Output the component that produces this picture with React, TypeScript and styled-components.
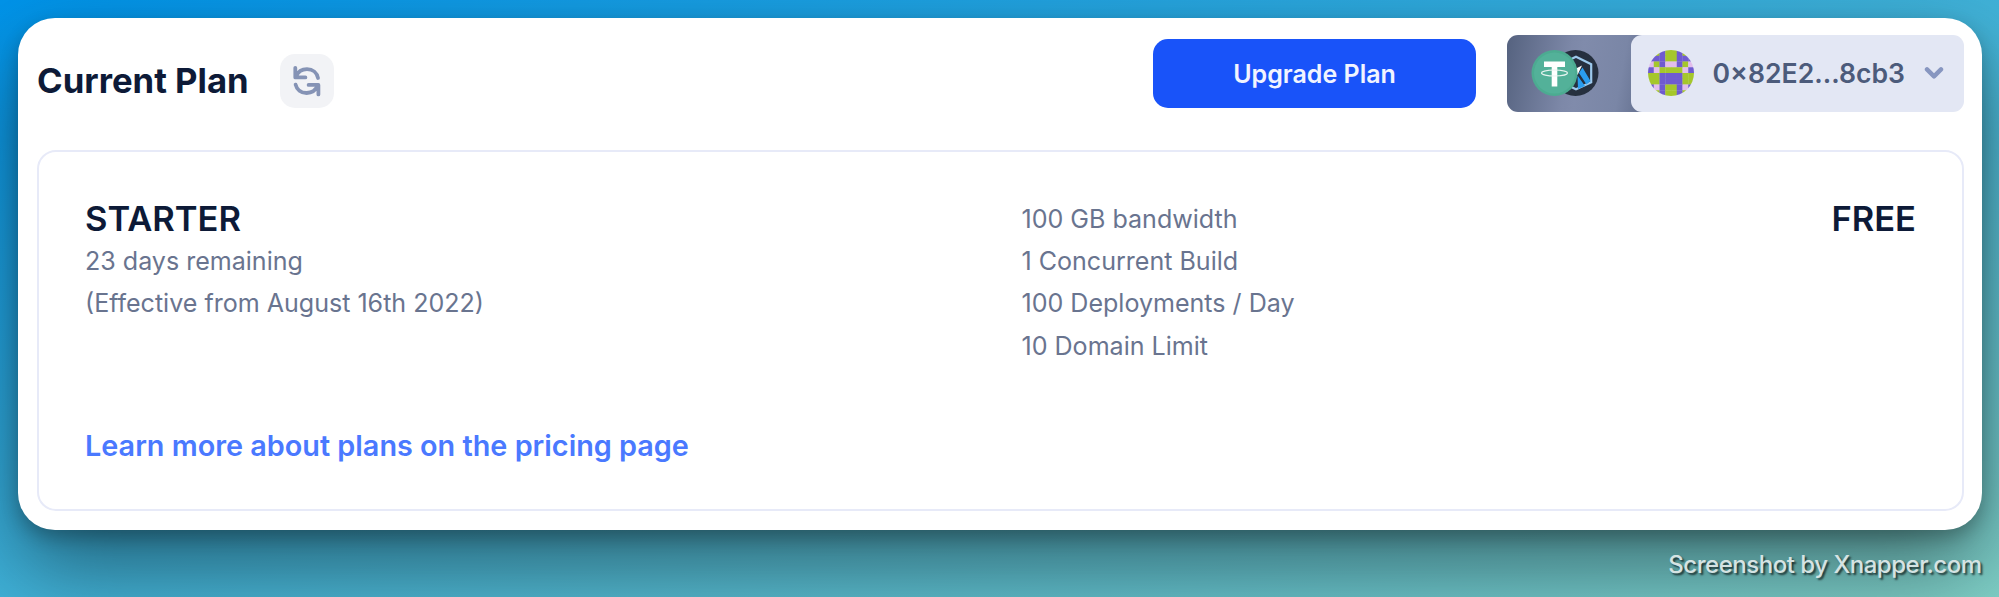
import React from "react";
import styled, { createGlobalStyle } from "styled-components";

const Global = createGlobalStyle`
  * { box-sizing: border-box; }
  body { margin: 0; font-family: Inter, "Liberation Sans", sans-serif; }
`;

const Backdrop = styled.main`
  height: 597px;
  padding: 17.5px 17.5px 0;
  display: flex;
  flex-direction: column;
  overflow: hidden;
  background: linear-gradient(to bottom right, #0093e9, #80d0c7);
`;

const Card = styled.section`
  height: 512.5px;
  flex: none;
  padding: 17.5px 17.5px 19.5px 19.5px;
  border-radius: 37px;
  background: #fff;
  box-shadow: 0 38px 86px rgba(0, 0, 0, 0.45), 0 8px 18px rgba(0, 0, 0, 0.24);
  display: flex;
  flex-direction: column;
`;

const Header = styled.header`
  height: 115px;
  display: flex;
  align-items: flex-start;
`;

const Title = styled.h1`
  margin: 25px 0 0;
  width: 243px;
  font-size: 34.7px;
  line-height: 40px;
  font-weight: 700;
  color: #0d1a37;
  white-space: nowrap;
`;

const RefreshButton = styled.button`
  width: 54px;
  height: 54px;
  margin: 19px auto 0 0;
  padding: 0;
  border: 0;
  border-radius: 15px;
  background: #f2f3f6;
`;

const UpgradeButton = styled.button`
  width: 323px;
  height: 69.5px;
  margin: 3.5px 30.5px 0 0;
  padding: 1px 0 0;
  border: 0;
  border-radius: 15px;
  background: #1953f9;
  color: #f1f4ff;
  font: 600 25px Inter, sans-serif;
`;

const Wallet = styled.div`
  width: 457.5px;
  height: 76.5px;
  display: flex;
`;

const Tokens = styled.div`
  width: 138px;
  padding: 15px 0 0 24px;
  border-radius: 11px 0 0 11px;
  background: linear-gradient(100deg, #55627f 0%, #7d88a8 44%, #808bab 52%, #7a86a6 80%, #64708f 98%);
`;

const Account = styled.div`
  flex: 1;
  display: flex;
  align-items: center;
  margin-left: -14px;
  padding-left: 17px;
  border-radius: 11px;
  background: #e3e7f4;
`;

const Address = styled.span`
  width: 211px;
  margin-left: 19px;
  font-size: 26.6px;
  font-weight: 600;
  color: #4c5b7b;
  white-space: nowrap;
`;

const Panel = styled.section`
  flex: 1;
  display: flex;
  flex-direction: column;
  justify-content: space-between;
  padding: 46px 46px 45px 46px;
  border: 2px solid #e7eaf8;
  border-radius: 19px;
`;

const Columns = styled.div`
  display: grid;
  grid-template-columns: 936.5px 1fr auto;
`;

const PlanName = styled.h2`
  margin: 0;
  font-size: 34.5px;
  line-height: 42px;
  font-weight: 600;
  color: #0d1a37;
`;

const Line = styled.p`
  margin: 0;
  font-size: 25.05px;
  line-height: 42.2px;
  color: #69748f;
  white-space: nowrap;
`;

const PricingLink = styled.a`
  font-size: 28.8px;
  line-height: 36px;
  font-weight: 600;
  color: #4a79ff;
`;

const Credit = styled.footer`
  align-self: flex-end;
  margin-top: 19px;
  font-size: 24px;
  line-height: 32px;
  font-weight: 500;
  letter-spacing: -0.48px;
  color: #d5e3e3;
  text-shadow: 2px 2px 2px rgba(0, 0, 0, 0.65);
  white-space: nowrap;
`;

const RefreshIcon = () => (
  <svg width="54" height="54" viewBox="0 0 54 54" fill="none" stroke="#8593b5" strokeWidth="3.8" strokeLinecap="round" strokeLinejoin="round">
    <path d="M15.3 13.8V23.4H25.4M16 22.4C18 17.7 22 15.1 27 15.1C32.8 15.1 37 18.8 38 24" />
    <path d="M15.6 30.6C16.8 35.6 21 39 26.6 39C31.6 39 35.8 36.2 37.8 31.6M28.6 30.9H38.4V40.4" />
  </svg>
);

const TokenIcons = () => (
  <svg width="70" height="48" viewBox="0 0 70 48">
    <circle cx="44.5" cy="23" r="23" fill="#26303f" />
    <path d="M45 6.7L60.2 14.2V32.3L45 39.3L30 32V14Z" fill="none" stroke="#9dc9ec" strokeWidth="2.2" />
    <path d="M44 19L51 15.5L46.5 25Z" fill="#fff" />
    <path d="M51.5 17.5L59.5 31L55.5 34.5L48 23ZM46.5 25.5L54 36L47 39Z" fill="#2a9df0" />
    <circle cx="23.5" cy="23" r="23" fill="#4cab91" />
    <circle cx="23.5" cy="23" r="20.5" fill="#53b199" />
    <path d="M13 11.5H34V17H26.3V36.5H20.7V17H13Z" fill="#fff" />
    <ellipse cx="23.5" cy="23" rx="13" ry="3" fill="none" stroke="#e6f4f0" strokeWidth="1.2" />
  </svg>
);

const rows = ["ggpggpgg", "pppggppp", "lgpllpgl", "plgggglp", "ggppppgg", "ggppppgg", "plpggplp", "ggpggpgg"];
const tint: Record<string, string> = { g: "#a5c72b", p: "#6f5bd0", l: "#e2bdec" };

const Avatar = () => (
  <svg width="46" height="46" viewBox="0 0 8 8">
    <clipPath id="avatar"><circle cx="4" cy="4" r="4" /></clipPath>
    <g clipPath="url(#avatar)">
      {rows.map((row, y) => row.split("").map((c, x) => (
        <rect key={`${x}-${y}`} x={x} y={y} width="1.04" height="1.04" fill={tint[c]} />
      )))}
    </g>
  </svg>
);

export default function App() {
  return (
    <Backdrop>
      <Global />
      <Card>
        <Header>
          <Title>Current Plan</Title>
          <RefreshButton aria-label="Refresh"><RefreshIcon /></RefreshButton>
          <UpgradeButton>Upgrade Plan</UpgradeButton>
          <Wallet>
            <Tokens><TokenIcons /></Tokens>
            <Account>
              <Avatar />
              <Address>0×82E2...8cb3</Address>
              <svg width="20" height="14" viewBox="0 0 20 14" fill="none" stroke="#8796c0" strokeWidth="4.4" strokeLinecap="round" strokeLinejoin="round">
                <path d="M3 3.4L10 10.4L17 3.4" />
              </svg>
            </Account>
          </Wallet>
        </Header>
        <Panel>
          <Columns>
            <div>
              <PlanName>STARTER</PlanName>
              <Line>23 days remaining</Line>
              <Line>(Effective from August 16th 2022)</Line>
            </div>
            <div>
              <Line>100 GB bandwidth</Line>
              <Line>1 Concurrent Build</Line>
              <Line>100 Deployments / Day</Line>
              <Line>10 Domain Limit</Line>
            </div>
            <PlanName>FREE</PlanName>
          </Columns>
          <PricingLink>Learn more about plans on the pricing page</PricingLink>
        </Panel>
      </Card>
      <Credit>Screenshot by Xnapper.com</Credit>
    </Backdrop>
  );
}
